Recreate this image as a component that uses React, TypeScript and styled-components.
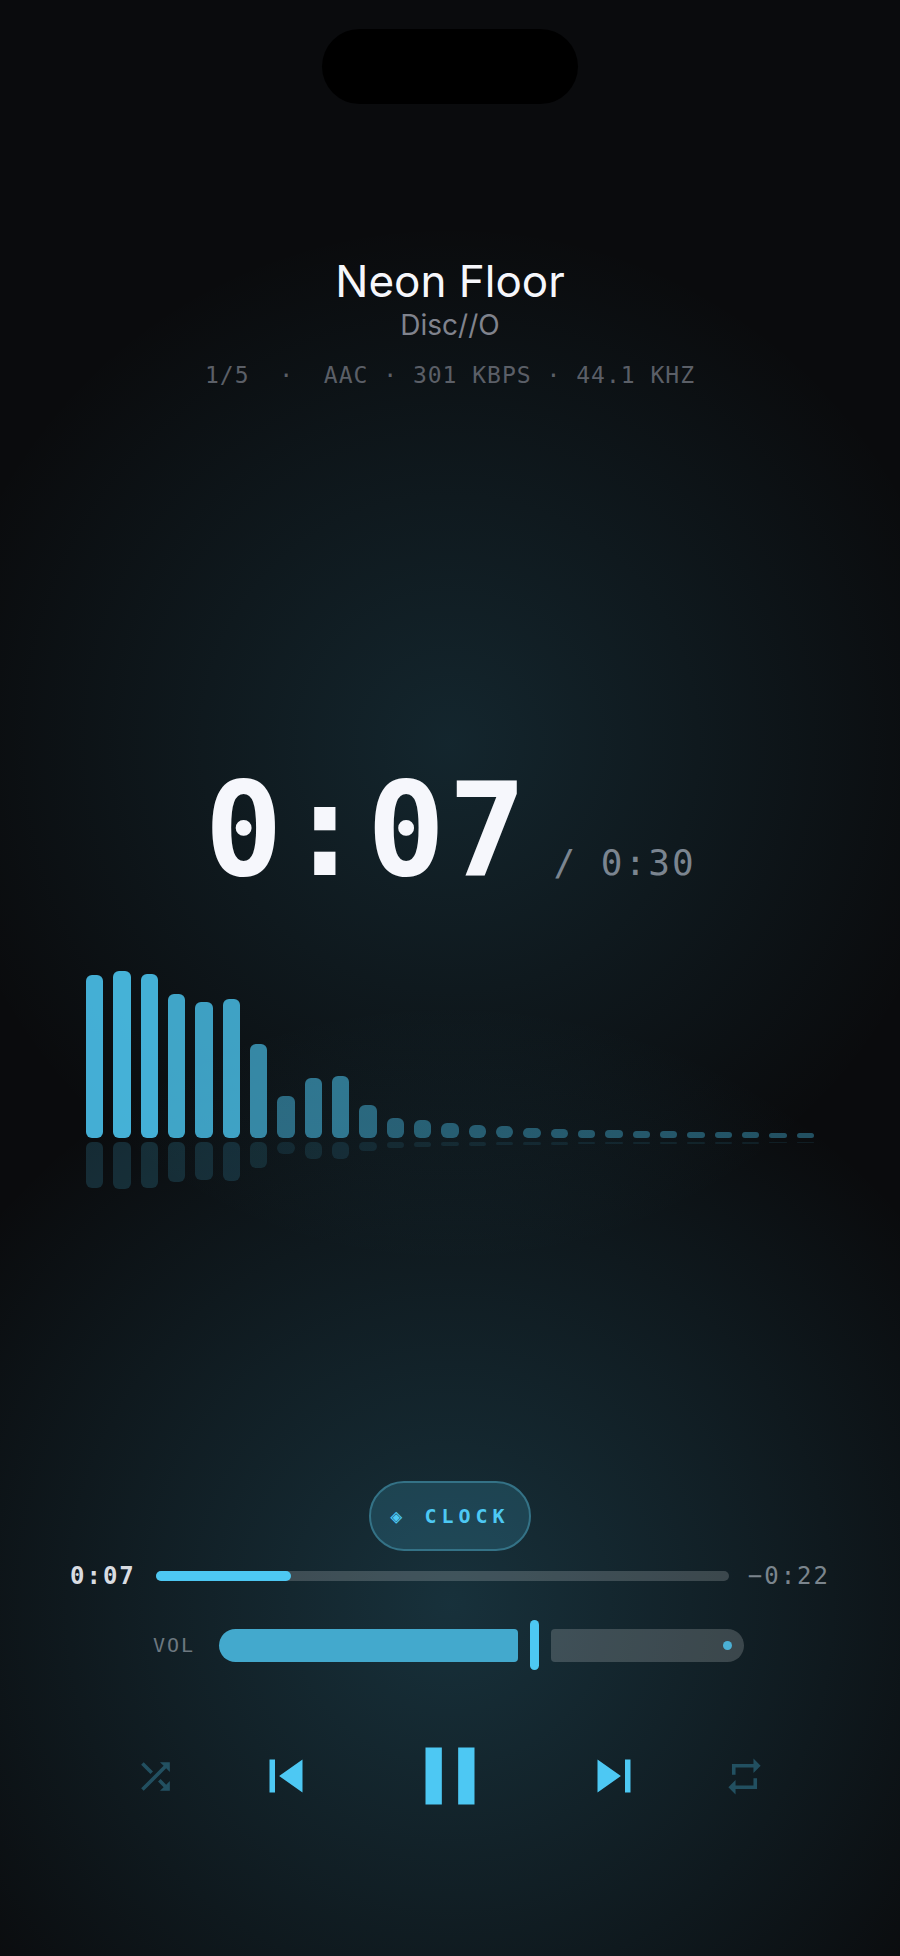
import React, { useState } from "react";
import styled, { createGlobalStyle } from "styled-components";

const accent = "#4dc8f3";
const mono = `"DejaVu Sans Mono", "Liberation Mono", monospace`;
const sans = `Inter, "Liberation Sans", sans-serif`;

const GlobalStyle = createGlobalStyle`
  *, *::before, *::after { box-sizing: border-box; }
  body { margin: 0; background: #0a0b0d; }
`;

const Screen = styled.div`
  min-height: 100vh;
  display: flex;
  flex-direction: column;
  align-items: stretch;
  font-family: ${sans};
  color: #f6f7fc;
  background:
    radial-gradient(circle 600px at 50% 82%, rgba(77, 200, 243, 0.2), rgba(77, 200, 243, 0.1) 50%, rgba(77, 200, 243, 0) 100%),
    radial-gradient(circle 520px at 50% 38%, rgba(77, 200, 243, 0.14), rgba(77, 200, 243, 0.07) 50%, rgba(77, 200, 243, 0) 100%),
    #0a0b0d;
`;

const Island = styled.div`
  width: 256px;
  height: 75px;
  margin: 29px auto 151px;
  border-radius: 38px;
  background: #000;
`;

const Header = styled.header`
  display: flex;
  flex-direction: column;
  align-items: center;
  text-align: center;
`;

const Title = styled.h1`
  margin: 0;
  font-size: 44px;
  line-height: 52px;
  font-weight: 400;
`;

const Artist = styled.p`
  margin: 0;
  font-size: 28px;
  line-height: 36px;
  color: #80838d;
`;

const Meta = styled.p`
  margin: 18px 0 0;
  font-family: ${mono};
  font-size: 23px;
  line-height: 28px;
  letter-spacing: 1px;
  white-space: pre;
  color: #5b5f67;
`;

const Stage = styled.main`
  flex: 1;
  display: flex;
  flex-direction: column;
  justify-content: center;
  padding: 70px 86px 0;
`;

const Clock = styled.div`
  display: flex;
  justify-content: center;
  align-items: baseline;
  gap: 24px;
  margin-bottom: 61px;
  font-family: ${mono};
`;

const Elapsed = styled.time`
  font-size: 130px;
  line-height: 160px;
  letter-spacing: 3px;
  font-weight: 700;
`;

const Total = styled.span`
  font-size: 36px;
  letter-spacing: 2px;
  white-space: pre;
  color: #7b8590;
`;

const Spectrum = styled.div`
  display: flex;
  flex-direction: column;
  gap: 4px;
`;

const BarRow = styled.div<{ $mirror?: boolean }>`
  display: flex;
  gap: 10px;
  height: ${(p) => (p.$mirror ? 48 : 167)}px;
  align-items: ${(p) => (p.$mirror ? "flex-start" : "flex-end")};
`;

const Bar = styled.span`
  flex: 1;
  border-radius: 6px;
  background: ${accent};
`;

const Controls = styled.footer`
  display: flex;
  flex-direction: column;
  align-items: stretch;
  padding: 0 70px 130px;
`;

const ModeButton = styled.button`
  align-self: center;
  width: 162px;
  height: 70px;
  padding: 0;
  border: 2px solid #347286;
  border-radius: 35px;
  background: rgba(77, 200, 243, 0.17);
  color: ${accent};
  font-family: ${mono};
  font-size: 20px;
  font-weight: 700;
  letter-spacing: 5px;
  white-space: nowrap;
`;

const SeekRow = styled.div`
  display: flex;
  align-items: center;
  height: 30px;
  margin-top: 10px;
`;

const SeekTime = styled.span<{ $strong?: boolean }>`
  flex: 0 0 ${(p) => (p.$strong ? 86 : 101)}px;
  text-align: ${(p) => (p.$strong ? "left" : "right")};
  font-family: ${mono};
  font-size: 24px;
  line-height: 30px;
  letter-spacing: 2px;
  font-weight: ${(p) => (p.$strong ? 700 : 400)};
  color: ${(p) => (p.$strong ? "#d9dce1" : "#7b858d")};
`;

const Slider = styled.div`
  position: relative;
  flex: 1;
  display: flex;
  align-items: center;
`;

const SliderInput = styled.input`
  position: absolute;
  inset: 0;
  width: 100%;
  height: 100%;
  margin: 0;
  opacity: 0;
  cursor: pointer;
`;

const SeekTrack = styled.div`
  flex: 1;
  height: 10px;
  border-radius: 5px;
  background: rgba(255, 255, 255, 0.18);
`;

const SeekFill = styled.div`
  height: 100%;
  border-radius: 5px;
  background: ${accent};
`;

const VolumeRow = styled.div`
  display: flex;
  align-items: center;
  height: 50px;
  margin-top: 29px;
  padding: 0 86px 0 83px;
`;

const VolumeLabel = styled.label`
  flex: 0 0 66px;
  font-family: ${mono};
  font-size: 20px;
  letter-spacing: 2px;
  color: #6d7880;
`;

const VolumeTracks = styled.div`
  flex: 1;
  display: flex;
  align-items: center;
  gap: 12px;
`;

const VolumeFill = styled.div`
  height: 33px;
  border-radius: 17px 4px 4px 17px;
  background: #43a9cd;
`;

const VolumeThumb = styled.div`
  width: 9px;
  height: 50px;
  border-radius: 5px;
  background: ${accent};
`;

const VolumeRest = styled.div`
  flex: 1;
  display: flex;
  align-items: center;
  justify-content: flex-end;
  height: 33px;
  padding-right: 12px;
  border-radius: 4px 17px 17px 4px;
  background: rgba(255, 255, 255, 0.18);

  &::after {
    content: "";
    width: 9px;
    height: 9px;
    border-radius: 50%;
    background: #4bb0d5;
  }
`;

const Transport = styled.div`
  display: grid;
  grid-template-columns: 2fr 2fr 3fr 2fr 2fr;
  align-items: center;
  justify-items: center;
  height: 100px;
  margin-top: 56px;
  padding: 0 20px;
`;

const IconButton = styled.button<{ $size: number; $dim?: boolean }>`
  display: flex;
  padding: 0;
  border: 0;
  background: none;
  color: ${accent};
  opacity: ${(p) => (p.$dim ? 0.3 : 1)};
  cursor: pointer;

  svg {
    width: ${(p) => p.$size}px;
    height: ${(p) => p.$size}px;
    fill: currentColor;
  }
`;

const levels = [
  163, 167, 164, 144, 136, 139, 94, 42, 60, 62, 33, 20, 18, 15, 13, 12, 10, 9, 8, 8, 7, 7, 6, 6, 6, 5, 5,
];

const transport = [
  { label: "Shuffle", size: 43, dim: true, d: "M10.59 9.17L5.41 4 4 5.41l5.17 5.17 1.42-1.41zM14.5 4l2.04 2.04L4 18.59 5.41 20 17.96 7.46 20 9.5V4h-5.5zm.33 9.41l-1.41 1.41 3.13 3.13L14.5 20H20v-5.5l-2.04 2.04-3.13-3.13z" },
  { label: "Previous", size: 66, d: "M6 6h2v12H6zm3.5 6l8.5 6V6z" },
  { label: "Pause", size: 98, d: "M6 19h4V5H6v14zm8-14v14h4V5h-4z" },
  { label: "Next", size: 66, d: "M6 18l8.5-6L6 6v12zM16 6v12h2V6h-2z" },
  { label: "Repeat", size: 43, dim: true, d: "M7 7h10v3l4-4-4-4v3H5v6h2V7zm10 10H7v-3l-4 4 4 4v-3h12v-6h-2v4z" },
];

export default function App() {
  const [position, setPosition] = useState(23.5);
  const [volume, setVolume] = useState(57);

  return (
    <>
      <GlobalStyle />
      <Screen>
        <Island />
        <Header>
          <Title>Neon Floor</Title>
          <Artist>Disc//O</Artist>
          <Meta>{"1/5  ·  AAC · 301 KBPS · 44.1 KHZ"}</Meta>
        </Header>
        <Stage>
          <Clock>
            <Elapsed>0:07</Elapsed>
            <Total>{"/ 0:30"}</Total>
          </Clock>
          <Spectrum aria-hidden="true">
            <BarRow>
              {levels.map((h, i) => (
                <Bar key={i} style={{ height: h, opacity: 0.35 + (h / 167) * 0.53 }} />
              ))}
            </BarRow>
            <BarRow $mirror>
              {levels.map((h, i) => (
                <Bar key={i} style={{ height: Math.round(h * 0.28), opacity: 0.09 + (h / 167) * 0.08 }} />
              ))}
            </BarRow>
          </Spectrum>
        </Stage>
        <Controls>
          <ModeButton type="button">◈ CLOCK</ModeButton>
          <SeekRow>
            <SeekTime $strong>0:07</SeekTime>
            <Slider>
              <SeekTrack>
                <SeekFill style={{ width: `${position}%` }} />
              </SeekTrack>
              <SliderInput
                type="range"
                aria-label="Seek"
                step="any"
                value={position}
                onChange={(e) => setPosition(Number(e.target.value))}
              />
            </Slider>
            <SeekTime>−0:22</SeekTime>
          </SeekRow>
          <VolumeRow>
            <VolumeLabel htmlFor="volume">VOL</VolumeLabel>
            <Slider>
              <VolumeTracks>
                <VolumeFill style={{ width: `${volume}%` }} />
                <VolumeThumb />
                <VolumeRest />
              </VolumeTracks>
              <SliderInput
                id="volume"
                type="range"
                max={90}
                value={volume}
                onChange={(e) => setVolume(Number(e.target.value))}
              />
            </Slider>
          </VolumeRow>
          <Transport>
            {transport.map((t) => (
              <IconButton key={t.label} type="button" aria-label={t.label} $size={t.size} $dim={t.dim}>
                <svg viewBox="0 0 24 24">
                  <path d={t.d} />
                </svg>
              </IconButton>
            ))}
          </Transport>
        </Controls>
      </Screen>
    </>
  );
}
